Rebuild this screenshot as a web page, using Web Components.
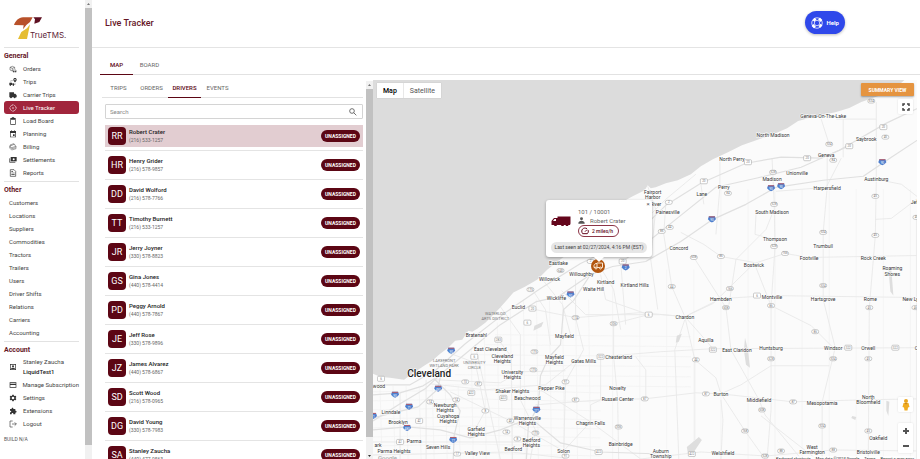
<!DOCTYPE html>
<html lang="en">
<head>
<meta charset="utf-8">
<title>Live Tracker</title>
<style>
html,body{margin:0;height:100%;overflow:hidden}
body{font-family:Roboto,"Liberation Sans",sans-serif;font-size:6px;line-height:8px;color:#444;background:#fff;--maroon:#5c0614}
</style>
</head>
<body>
<tms-app></tms-app>
<script>
const define = (name, html, setup) => {
  const t = document.createElement('template');
  t.innerHTML = '<style>*{box-sizing:border-box}button,input,a{font:inherit;color:inherit}a{text-decoration:none}button{border:0;padding:0;margin:0;background:none;cursor:pointer}[hidden]{display:none}</style>' + html;
  customElements.define(name, class extends HTMLElement {
    connectedCallback() {
      if (this.shadowRoot) return;
      const root = this.attachShadow({mode: 'open'});
      root.append(t.content.cloneNode(true));
      if (setup) setup(this, root);
    }
  });
};

const icons = {
  orders: '<path fill="none" stroke="#444" stroke-width="1.6" d="M10 18 3 15V7l7-3 7 3v5M3 7l7 3 7-3M10 10v8M12 15h9v5h-9z"/><circle cx="14" cy="20" r="2"/><circle cx="20" cy="20" r="2"/>',
  trips: '<path d="M18 0c-3 0-5 2-5 5 0 4 5 8 5 8s5-4 5-8c0-3-2-5-5-5zm0 7a2 2 0 1 1 0-4 2 2 0 0 1 0 4z"/><path d="M1 14h8v7H1zm9 2h4l2 3v2h-6z"/><circle cx="4" cy="22" r="2"/><circle cx="13" cy="22" r="2"/><path fill="none" stroke="#444" stroke-width="1.5" stroke-dasharray="2 1.5" d="M12 8H5v5M18 15v6"/>',
  truck: '<path d="M1 4h14v4h4l4 5v6h-3a3 3 0 0 1-6 0H9a3 3 0 0 1-6 0H1z"/>',
  live: '<g fill="none" stroke="#fff" stroke-width="1.5"><circle cx="12" cy="12" r="9" stroke-dasharray="11 3.1" stroke-dashoffset="-2"/><path d="M12 0v4M12 20v4M0 12h4M20 12h4"/></g><circle cx="12" cy="12" r="2" fill="#fff"/>',
  board: '<path fill-rule="evenodd" d="M4 3h4l1-2h6l1 2h4v20H4zm2 5v13h12V8z"/>',
  plan: '<path fill-rule="evenodd" d="M3 3h3V1h2v2h8V1h2v2h3v19H3zm2 6v11h14V9z"/><path d="M12 13h5v5h-5z"/>',
  bill: '<g fill="none" stroke="#444" stroke-width="1.5"><path d="M2 10 15 4l6 6-13 4zM2 10v5l6 6 13-4v-7M4 13l5 4 11-3M4 9l-1-3L14 2l5 4"/></g>',
  settle: '<path d="M5 3h18v13H5z"/><path fill="none" stroke="#222" stroke-width="2" d="M2 7v12h17"/><circle cx="14" cy="9.500" r="3" fill="#fff"/>',
  report: '<path fill="none" stroke="#333" stroke-width="2" d="M4 2h11l5 5v15H4z"/><path d="M7 11h10v2H7zm0 4h10v2H7zM7 7h5v2H7z"/>',
  user: '<path fill-rule="evenodd" d="M3 3h18v18H3zm2 2v14h14V5z"/><circle cx="12" cy="10" r="3"/><path d="M6 18c0-5 12-5 12 0z"/>',
  card: '<path fill-rule="evenodd" d="M2 4h20v16H2zm2 2v2h16V6zm0 6v6h16v-6z"/>',
  gear: '<path fill-rule="evenodd" d="M10 2h4l1 3 2 1 3-1 2 4-2 2v2l2 2-2 4-3-1-2 1-1 3h-4l-1-3-2-1-3 1-2-4 2-2v-2L2 9l2-4 3 1 2-1zm2 6a4 4 0 1 0 0 8 4 4 0 0 0 0-8z"/>',
  puzzle: '<path d="M3 6h5c-1-5 6-5 5 0h6v5c5-1 5 6 0 6v5h-6c1-5-6-5-5 0H3v-6c5 1 5-6 0-5z"/>',
  logout: '<path fill="none" stroke="#444" stroke-width="2" d="M11 3H3v18h8M9 12h13M17 7l5 5-5 5"/>'
};
const svgIcon = (name, size) => `<svg width="${size}" height="${size}" viewBox="0 0 24 24" fill="#333" aria-hidden="true">${icons[name]}</svg>`;

define('scroll-rail', `<style>
:host{display:flex;flex-direction:column;align-items:stretch;width:7px;background:#f1f1f1;flex:none}
svg{display:block;margin:0 auto;flex:none}
i{display:block;background:#c1c1c1;flex:1}
.end{height:22px;display:flex;align-items:flex-end}
:host([plain]) .end svg{visibility:hidden}
:host([plain]) .end{height:14px}
</style><svg width="7" height="8" viewBox="0 0 7 8"><path d="M2 5h3L3.500 3z" fill="#777"/></svg><i></i><div class="end"><svg width="7" height="5" viewBox="0 0 7 5"><path d="M2 1h3L3.500 3z" fill="#333"/></svg></div>`);

define('nav-item', `<style>
:host{display:block}
a{display:flex;align-items:center;height:13px;padding-left:5px;border-radius:3px;white-space:nowrap}
a span{width:14px;display:flex;align-items:center}
:host([active]) a{background:#a1253c;color:#fff}
:host([tall]) a{height:22px;line-height:10px}
:host([plain]) a span{display:none}
</style><a href="#"><span></span><div><slot></slot></div></a>`, (el, r) => {
  const n = el.getAttribute('icon');
  if (n) r.querySelector('span').innerHTML = svgIcon(n, 8);
});

define('nav-group', `<style>
:host{display:block;border-top:1px solid #e2e2e2;padding-top:3px}
h2{margin:0;font-size:7px;line-height:11px;font-weight:700;color:#651626}
</style><h2></h2><slot></slot>`, (el, r) => r.querySelector('h2').textContent = el.getAttribute('label'));

define('brand-logo', `<style>
:host{display:flex;align-items:flex-end;padding:0 0 7px 10px;height:47px;color:#6b2a3a}
svg{display:block;flex:none;margin-right:-14px}
b{font:400 8px/10px Inter,sans-serif;color:#5d2435}
</style><svg width="30" height="24" viewBox="0 0 90 72" aria-hidden="true"><path fill="#b8512a" d="M0 27C5 14 14 5 27 4h29l-8 14-11 9-10 13 2-12z"/><path fill="#5e1022" d="M58 4h26l-8 14-15 5 2-13z"/><path fill="#e5bd32" d="M48 25 39 69H12l10-21 17-11z"/></svg><b>TrueTMS.</b>`);

define('side-nav', `<style>
:host{display:flex;width:92px;flex:none;height:100%;overflow:hidden}
nav{flex:1;min-width:0;padding:0 6px 0 4px}
nav-group{margin-bottom:2px}
b{font-weight:500;color:#222}
small{display:block;font-size:5px;line-height:8px;margin-top:5px;color:#555}
</style><nav aria-label="Main"><brand-logo></brand-logo>
<nav-group label="General"><nav-item icon="orders">Orders</nav-item><nav-item icon="trips">Trips</nav-item><nav-item icon="truck">Carrier Trips</nav-item><nav-item icon="live" active>Live Tracker</nav-item><nav-item icon="board">Load Board</nav-item><nav-item icon="plan">Planning</nav-item><nav-item icon="bill">Billing</nav-item><nav-item icon="settle">Settlements</nav-item><nav-item icon="report">Reports</nav-item></nav-group>
<nav-group label="Other"><nav-item plain>Customers</nav-item><nav-item plain>Locations</nav-item><nav-item plain>Suppliers</nav-item><nav-item plain>Commodities</nav-item><nav-item plain>Tractors</nav-item><nav-item plain>Trailers</nav-item><nav-item plain>Users</nav-item><nav-item plain>Driver Shifts</nav-item><nav-item plain>Relations</nav-item><nav-item plain>Carriers</nav-item><nav-item plain>Accounting</nav-item></nav-group>
<nav-group label="Account"><nav-item icon="user" tall>Stanley Zaucha<br><b>LiquidTest1</b></nav-item><nav-item icon="card">Manage Subscription</nav-item><nav-item icon="gear">Settings</nav-item><nav-item icon="puzzle">Extensions</nav-item><nav-item icon="logout">Logout</nav-item></nav-group>
<small>BUILD N/A</small></nav><scroll-rail plain></scroll-rail>`);

define('page-header', `<style>
:host{display:flex;align-items:center;justify-content:space-between;height:48px;flex:none;padding:0 75px 2px 13px;border-bottom:1px solid #e4e4e4}
h1{margin:0;font-size:9px;line-height:12px;font-weight:500;color:#651626}
button{display:flex;align-items:center;gap:4px;height:23px;padding:0 6px;border-radius:12px;background:#2f48ea;color:#fff;font-weight:700;box-shadow:0 1px 3px #0004}
svg{display:block}
</style><h1>Live Tracker</h1><button><svg width="12" height="12" viewBox="0 0 24 24" fill="none" stroke="#fff" aria-hidden="true"><circle cx="12" cy="12" r="10.500" stroke-width="1.500"/><circle cx="12" cy="12" r="5.500" stroke-width="1.500"/><path stroke-width="5" d="M5 8 9 3M16 3l5 5M21 15l-4 5M8 21l-5-5"/></svg>Help</button>`);

define('tab-bar', `<style>
:host{display:flex;border-bottom:1px solid #e2e2e2;flex:none}
button{width:33px;height:18px;color:#666;border-bottom:1px solid transparent;margin-bottom:-1px;padding-bottom:1px}
button[aria-selected=true]{color:var(--maroon);border-color:var(--maroon);font-weight:500}
</style>`, (el, r) => {
  el.setAttribute('role', 'tablist');
  el.getAttribute('tabs').split(',').forEach(t => {
    const b = document.createElement('button');
    b.textContent = t; b.setAttribute('role', 'tab');
    b.setAttribute('aria-selected', t === el.getAttribute('selected'));
    r.append(b);
  });
});

define('driver-row', `<style>
:host{display:block;height:29px;border-bottom:1px solid #e4e4e4;padding:3px 0}
.row{display:flex;align-items:center;height:22px;padding:0 3px 0 3px}
:host([active]) .row{background:#e2cdd1}
.av{width:18px;height:18px;border-radius:4px;background:var(--maroon);color:#fff;font-size:9px;line-height:18px;text-align:center;margin-right:3px}
.who{flex:1}
b{display:block;font-weight:500;color:#222}
span{display:block;font-size:5px;color:#666}
em{font-style:normal;font-size:5px;font-weight:700;color:#fff;background:var(--maroon);border-radius:6px;height:12px;line-height:12px;width:39px;text-align:center}
</style><div class="row"><div class="av"></div><div class="who"><b></b><span></span></div><em>UNASSIGNED</em></div>`, (el, r) => {
  r.querySelector('.av').textContent = el.getAttribute('initials');
  r.querySelector('b').textContent = el.getAttribute('name');
  r.querySelector('span').textContent = el.getAttribute('phone');
});

define('search-box', `<style>
:host{display:flex;align-items:center;height:15px;border:1px solid #d4d4d4;padding:0 5px 0 4px;border-radius:1px}
input{flex:1;border:0;outline:0;padding:0;min-width:0;background:none}
input::placeholder{color:#888;opacity:1}
</style><input type="text" aria-label="Search" placeholder="Search"><svg width="8" height="8" viewBox="0 0 24 24" fill="none" stroke="#555" stroke-width="2.500"><circle cx="9" cy="9" r="7"/><path d="m14 14 8 8"/></svg>`);

const drivers = [['RR','Robert Crater','(216) 533-1257'],['HR','Henry Grider','(216) 578-9857'],['DD','David Wolford','(216) 578-7766'],['TT','Timothy Burnett','(216) 533-1257'],['JR','Jerry Joyner','(330) 578-8823'],['GS','Gina Jones','(440) 578-4414'],['PD','Peggy Arnold','(440) 578-7867'],['JE','Jeff Rose','(330) 578-9896'],['JZ','James Alvarez','(440) 578-6867'],['SD','Scott Wood','(216) 578-0965'],['DG','David Young','(330) 578-7983'],['SA','Stanley Zaucha','(440) 477-9563']];

define('driver-panel', `<style>
:host{display:flex;width:271px;flex:none;min-height:0}
.col{flex:1;overflow:hidden;padding:0 3px}
tab-bar{margin:0 0 6px -3px}
search-box{margin-bottom:3px}
scroll-rail{margin-top:1px}
</style><div class="col"><tab-bar tabs="TRIPS,ORDERS,DRIVERS,EVENTS" selected="DRIVERS"></tab-bar><search-box></search-box><div class="list"></div></div><scroll-rail></scroll-rail>`, (el, r) => {
  drivers.forEach((d, i) => {
    const e = document.createElement('driver-row');
    e.setAttribute('initials', d[0]); e.setAttribute('name', d[1]); e.setAttribute('phone', d[2]);
    if (!i) e.setAttribute('active', '');
    r.querySelector('.list').append(e);
  });
});

/* Map geography: place names, road shields and road geometry share one coordinate space. */
const places = `Geneva-On-The-Lake 822 117|North Madison 772 136|Saybrook 865 140|Geneva 825 156|North Perry 731 160|Unionville 796 174|Madison 771 180|Perry 723 188|Lane 701 195|Harpersfield 826 189|Austinburg 875 180|Jef 913 203|South Madison 771 213|Thompson 774 240|Trumbull 822 247|Footville 808 259|Rock Creek 872 259|Bostwick 753 266|Roaming 891 269|Shores 891 274|Hambden 720 299|Montville 771 297|Hartsgrove 822 299|Rome 869 299|New Ly 909 299|Chardon 684 317|Aquilla 705 340|East Claridon 736 350|Huntsburg 770 348|Windsor 832 348|Orwell 867 348|C 915 348|Burton 720 394|Middlefield 758 400|Mesopotamia 821 403|North 867 397|Bloomfield 867 402|Oakfield 877 438|Welshfield 722 453|West 811 447|Farmington 811 452|Bristolville 867 452|Fairport 652 193|Harbor 652 198|River 655 205|Painesville 667 213|Concord 678 249|Eastlake 558 264|Willoughby 581 274|Willowick 549 279|Kirtland 605 282|Kirtland Hills 634 285|Waite Hill 593 289|Wickliffe 556 298|Euclid 518 307|Bratenahl 476 335|East Cleveland 490 349|Cleveland 502 356|Heights 502 361|Mayfield 564 336|Mayfield 554 357|Heights 554 362|Gates Mills 583 361|Chesterland 618 357|University 512 372|Heights 512 377|Pepper Pike 551 388|Shaker Heights 512 391|Beachwood 527 398|Novelty 617 388|Russell Center 617 399|Warrensville 527 418|Heights 527 423|Chagrin Falls 590 423|Bedford 531 440|Heights 531 445|Bedford 513 449|Bainbridge 620 444|Solon 563 451|Auburn 660 451|Township 660 456|Garfield 476 429|Heights 476 434|Valley View 477 453|wood 379 386|Linndale 391 412|Brooklyn 398 422|Newburgh 445 405|Heights 445 410|Cuyahoga 448 416|Heights 448 421|Parma 414 441|Parma Heights 394 451|Seven Hills 438 447|ark 378 445`.split('|').map(s => s.match(/^(.*) (\d+) (\d+)$/).slice(1));
const areas = [['WATERLOO',495,314],['ARTS DISTRICT',495,319],['LAKEFRONT',444,361],['WETLAND PARK',444,366],['UNIVERSITY',474,363],['CIRCLE',474,368]];
const ovals = '534 870 102|45 884 138|534 828 145|84 727 194|528 772 173|528 773 205|84 832 161|45 874 197|45 874 236|534 822 233|528 773 247|166 784 254|86 720 257|608 693 258|166 729 289|608 725 308|86 770 306|534 822 286|45 868 308|46 915 218|46 914 308|86 814 332|44 695 360|528 770 359|534 832 359|45 867 359|87 705 394|87 792 402|608 761 410|168 744 431|534 821 426|45 867 431|88 780 451|88 832 450|528 764 456|2 668 203|86 661 232|44 669 228|44 671 287|2 590 262|640 560 271|175 530 290|174 575 318|306 613 324|175 534 352|175 533 370|91 565 382|87 575 400|87 644 399|87 478 384|8 485 411|43 510 421|14 506 432|8 517 439|175 535 433|306 618 427|91 565 456|10 465 382|14 456 400|14 430 402|17 457 454'.split('|').map(s=>s.split(' '));
const rects = '20 882 128|20 848 147|20 806 159|20 747 163|20 703 182|6 756 296|322 712 350|322 847 348|322 894 348|422 691 454|20 622 262|20 532 309|6 648 315|6 527 323|283 498 340|6 474 357|322 600 357|422 503 398|422 598 452|6 381 379|422 471 393|42 419 421|42 400 442'.split('|').map(s=>s.split(' '));
const freeways = '90 881 163|90 770 189|90 780 187|90 711 220|2 625 268|90 570 295|271 536 410|90 451 351|490 438 389|90 395 395|71 409 407|71 373 416|480 407 428|77 453 440'.split('|').map(s=>s.split(' '));

const major = ['M373 421 400 404 425 389 441 374 470 350 500 325 536 302 558 297 590 275 612 267 645 262 680 242 712 220 745 205 775 188 822 181 862 177 890 158 925 135',
'M373 395 400 393 423 386 434 379 450 395 460 411 454 435 453 459','M373 430 407 427 440 430 470 438 500 430 530 418 560 443 600 452 660 454',
'M590 275 573 301 563 310 560 345 548 358 540 376 538 405 528 425 526 459','M441 374 437 390 418 407 373 418',
'M622 262 650 240 680 216 715 188 755 179 800 168 838 151 885 124 925 105','M373 385 410 385 436 370 465 344 505 313 540 289 580 264 630 240 665 206 700 184 745 164 780 158 820 159 845 148'];
const roads = ['M590 262 630 235 665 200 695 175','M665 205 663 235 671 287 684 317 694 360 694 440','M680 233 703 245 720 257 753 263 770 306 810 326 832 348','M684 317 720 299 770 296 920 298','M684 317 640 313 575 318 530 309','M684 317 712 304 753 264 784 254 808 258 920 256',
'M600 357 660 352 712 349 920 348','M771 159 773 200 774 247 770 306 770 410 766 459','M826 155 826 188 822 233 822 300 834 348 821 402 821 459','M875 103 875 180 874 236 868 308 867 459','M693 258 725 308 730 350 758 400 764 415 800 459','M720 394 744 431 764 459','M720 394 792 402 860 400 920 399','M720 394 740 385 770 366 828 366',
'M640 459 700 452 765 456 832 450 920 451','M613 324 613 357 617 399 618 459','M575 280 575 318 583 350 565 382 563 459','M580 357 545 385 485 390 430 384','M535 405 600 400 644 399 695 393 720 394','M645 399 645 370 635 357','M590 422 640 459','M590 422 563 451 510 421 450 392','M590 422 540 390','M590 422 590 405 600 400 600 357','M600 275 605 300 648 315 613 324','M561 291 585 315 660 315 684 317',
'M498 340 511 357 512 459','M435 380 500 383 520 372 565 371','M475 345 485 390 500 459','M426 380 426 459','M400 393 400 459','M373 442 530 442','M373 455 510 452 565 458','M694 360 715 378 720 394','M684 317 700 335 712 349','M915 218 915 459','M874 220 890 219 915 200','M875 180 900 185 918 199','M840 159 825 188 775 192','M828 145 820 120','M842 158 842 120','M875 120 835 120','M719 160 719 188 715 235','M700 185 703 205','M755 215 754 235 774 240','M773 210 765 230 735 260 728 305','M647 187 655 210 650 260 657 310','M620 262 625 325','M600 268 613 290 620 330','M684 320 674 350 678 459','M720 400 722 420 720 459','M760 416 815 459','M500 307 520 335 520 400 535 430 530 459','M530 287 545 310 550 345','M542 280 562 305 570 335','M448 353 475 363 485 411 470 438'];
const grid = [];
for (let x = 380; x < 600; x += 13) grid.push(`M${x} ${x < 470 ? 386 : Math.max(300, 350 - (x - 470))} ${x + 2} 459`);
for (let y = 392; y < 459; y += 9) grid.push(`M373 ${y} 470 ${y - 2} 600 ${y + 1}`);
for (let y = 335; y < 392; y += 10) grid.push(`M${495 - (y - 335)} ${y} 690 ${y + 2}`);
for (let x = 612; x < 915; x += 27) grid.push(`M${x} ${x < 700 ? 270 : 190} ${x} 459`);
const badge = (w, h, rx) => ([t, x, y]) => `<rect x="${x - w / 2}" y="${y - h / 2}" width="${w}" height="${h}" rx="${rx}" fill="#fff" stroke="#999" stroke-width=".5"/><text x="${x}" y="${+y + 1}" font-size="3" fill="#777">${t}</text>`;

define('map-canvas', `<style>:host{display:block;height:100%}svg{display:block;width:100%;height:100%}text{text-anchor:middle}</style>
<svg viewBox="373 81 544 378" preserveAspectRatio="xMinYMin slice" font-family="Roboto,sans-serif" role="img" aria-label="Map of northeast Ohio">
<rect x="373" y="81" width="900" height="800" fill="#fbfbfb"/>
<g fill="none" stroke="#f2f2f2" stroke-width=".8">${grid.map(d => `<path d="${d}"/>`).join('')}</g>
<g fill="none" stroke="#e9e9e9" stroke-width=".9" stroke-linejoin="round">${roads.map(d => `<path d="${d}"/>`).join('')}</g>
<g fill="none" stroke="#e0e0e0" stroke-width="1.200" stroke-linejoin="round">${major.map(d => `<path d="${d}"/>`).join('')}</g>
<path fill="#dcdcdc" d="M373 81H903L892 91 877 97 860 103 848 109 835 113 812 118 797 122 786 129 770 136 741 146 727 153 712 160 700 167 690 175 677 181 665 184 655 188 650 189 647 186 644 191 632 197 623 202 605 222 585 241 565 256 547 270 537 280 525 287 513 293 507 300 499 309 490 318 485 323 477 329 472 332 468 331 462 340 455 341 448 348 440 354 432 361 424 366 412 374 404 380 390 378 380 377 373 374Z"/>
<g fill="#dedede"><path d="m744 338 3 12 2 18-4-3-2-14zM887 268l3 2 2 26-3-4zM534 326l9-4-2 5-8 4zM676 336l5-2-3 8-3 1zM686 447l12-10 3 3-8 12-6 1zM885 401l3 1-1 14-2-5zM851 416l4 1-1 3-4-2z"/></g>
${ovals.map(badge(7, 4, 2)).join('')}${rects.map(badge(7, 5, 1)).join('')}
${freeways.map(([t, x, y]) => `<path transform="translate(${x} ${y})" d="M-3-3h6l1 3-2 2-2 1-2-1-2-2z" fill="#4e7fce"/><path transform="translate(${x} ${y})" d="M-3-3h6v1h-6z" fill="#b75c67"/><text x="${x}" y="${+y + 2}" font-size="3" fill="#fff">${t}</text>`).join('')}
<g font-size="5" fill="#333" stroke="#fff" stroke-width="1" paint-order="stroke">${places.map(([t, x, y]) => `<text x="${x}" y="${+y + 2}">${t}</text>`).join('')}</g>
<g font-size="4" fill="#777">${areas.map(([t, x, y]) => `<text x="${x}" y="${y + 1}">${t}</text>`).join('')}</g>
<text x="429" y="377" font-size="10" font-weight="500" fill="#222" stroke="#fff" stroke-width="1" paint-order="stroke">Cleveland</text>
</svg>`);

define('vehicle-popup', `<style>
:host{display:block;width:106px;background:#fff;border-radius:3px;box-shadow:0 1px 3px #0005;padding:4px 5px;position:relative;color:#666}
:host::after{content:"";position:absolute;left:50%;top:100%;margin-left:-5px;border:5px solid transparent;border-top-color:#fff;border-bottom:0}
.top{display:flex;align-items:center;gap:7px;height:35px}
.info{flex:1;line-height:9px}
.name{display:flex;align-items:center;gap:5px}
.speed{display:inline-flex;align-items:center;gap:3px;height:12px;line-height:10px;border:1px solid #8d3547;border-radius:6px;padding:0 5px 0 2px;color:var(--maroon);font-size:5px;font-weight:500}
.seen{margin-top:3px;height:11px;line-height:11px;border-radius:6px;background:#e6e6e6;text-align:center;white-space:nowrap;font-size:5px;color:#444}
button{position:absolute;right:1px;top:0;width:6px;line-height:8px;color:#555}
svg{display:block;flex:none}
</style><button aria-label="Close">×</button><div class="top"><svg width="20" height="11" viewBox="0 0 40 22" fill="#64061c" aria-hidden="true"><path fill-rule="evenodd" d="M13 1h26v14l-1 3h-3l-1 2h-4l-1-2h-3l-1 2h-4l-1-2h-8l-1 2H7l-1-2H1v-8l5-6h7zM7 6l-3 4h6V6z"/></svg>
<div class="info"><div>101 / 10001</div><div class="name"><svg width="7" height="7" viewBox="0 0 24 24" fill="#555"><circle cx="12" cy="6" r="5"/><path d="M1 23c0-13 22-13 22 0z"/></svg>Robert Crater</div><div class="speed"><svg width="8" height="8" viewBox="0 0 24 24" fill="none" stroke="#64061c" stroke-width="3"><path d="M5 20C-3 9 8-1 18 5M21 9c2 4 1 8-2 11H5M12 14l6-6"/></svg>2 miles/h</div></div></div>
<div class="seen">Last seen at 02/27/2024, 4:16 PM (EST)</div>`);

define('map-view', `<style>
:host{display:block;position:relative;flex:1;min-width:0;overflow:hidden;margin:0 3px 0 0}
vehicle-popup{position:absolute;left:173px;top:120px}
.pin{position:absolute;left:218px;top:179px;width:14px;height:14px;border-radius:7px;background:#b3560f;display:flex;align-items:center;justify-content:center}
.types{position:absolute;left:4px;top:3px;display:flex;background:#fff;font-size:7px;color:#555;box-shadow:0 0 1px #0003}
.types button{height:15px;padding:0 6px}
.types button:first-child{color:#000;font-weight:500;border-right:1px solid #e8e8e8}
.sum{position:absolute;right:3px;top:3px;width:53px;height:13px;background:#e59440;color:#fff;font-size:5px;font-weight:700;border-radius:1px;box-shadow:0 1px 2px #0005;white-space:nowrap}
.right{position:absolute;right:4px;display:flex;flex-direction:column;background:#fff;border-radius:1px;box-shadow:0 0 2px #0002}
.right button{width:15px;height:15px;display:grid;place-items:center}
.full{top:19px}.man{bottom:47px}.zoom{bottom:6px}
.logo{position:absolute;left:5px;bottom:-2px;font-size:6px;line-height:7px;font-weight:500;color:#aaa}
footer{position:absolute;right:3px;bottom:-3px;display:flex;gap:5px;font-size:4px;line-height:6px;color:#222;background:#fffa}
svg{display:block}
</style><map-canvas></map-canvas>
<div class="types"><button>Map</button><button>Satellite</button></div><button class="sum">SUMMARY VIEW</button>
<div class="right full"><button aria-label="Fullscreen"><svg width="8" height="8" viewBox="0 0 8 8" fill="none" stroke="#444" stroke-width="1.500"><path d="M1 3V1h2M5 1h2v2M7 5v2H5M3 7H1V5"/></svg></button></div>
<div class="right man"><button aria-label="Street View"><svg width="8" height="12" viewBox="0 0 16 24"><circle cx="8" cy="4" r="4" fill="#e9a520"/><path fill="#f0ac22" d="M3 8h10l2 8-3 1-1 6H5l-1-6-3-1z"/><path fill="#c9821a" d="M5 8h6l-3 3z"/></svg></button></div>
<div class="right zoom"><button aria-label="Zoom in"><svg width="8" height="8" viewBox="0 0 8 8"><path d="M3 1h2v2h2v2H5v2H3V5H1V3h2z" fill="#555"/></svg></button><button aria-label="Zoom out"><svg width="8" height="8" viewBox="0 0 8 8"><path d="M1 3h6v2H1z" fill="#555"/></svg></button></div>
<div class="logo">Google</div><footer><span>Keyboard shortcuts</span><span>Map data ©2024 Google</span><span>Terms</span><span>Report a map error</span></footer>
<div class="pin"><svg width="10" height="8" viewBox="0 0 20 16" fill="none" stroke="#f8e6d2" stroke-width="2"><path d="M8 2h11v9H2V7l3-4h3v8"/><circle cx="6" cy="12" r="2" fill="#b3560f"/><circle cx="15" cy="12" r="2" fill="#b3560f"/></svg></div>
<vehicle-popup></vehicle-popup>`);

define('tms-app', `<style>
:host{display:flex;height:100vh;overflow:hidden}
main{flex:1;min-width:0;display:flex;flex-direction:column}
.body{flex:1;min-height:0;display:flex;padding-left:10px}
.tabs{padding:9px 0 5px 8px}
</style><side-nav></side-nav><main><page-header></page-header><div class="tabs"><tab-bar tabs="MAP,BOARD" selected="MAP"></tab-bar></div><div class="body"><driver-panel></driver-panel><map-view></map-view></div></main>`);
</script>
</body>
</html>
